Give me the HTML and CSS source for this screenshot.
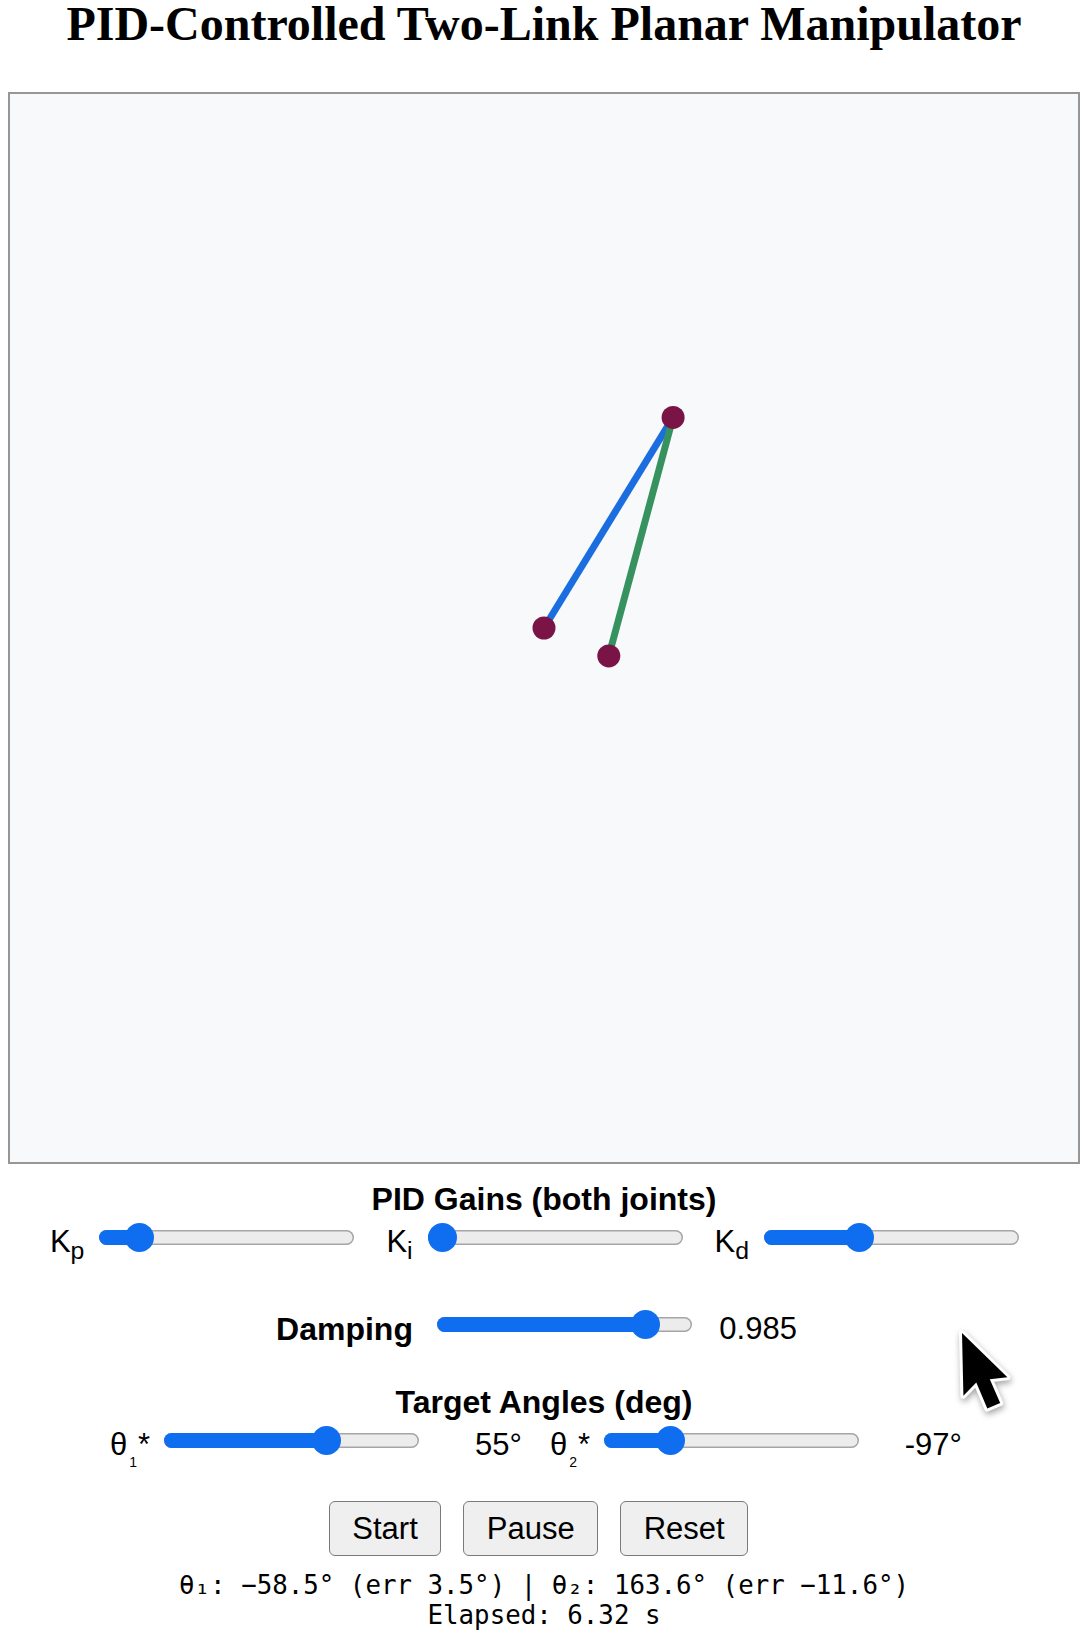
FILE: index.html
```html
<!DOCTYPE html>
<html lang="en">
<head>
<meta charset="utf-8">
<title>PID-Controlled Two-Link Planar Manipulator</title>
<link rel="stylesheet" href="styles.css">
</head>
<body>
<h1 class="title">PID-Controlled Two-Link Planar Manipulator</h1>

<div class="stage">
  <svg class="arm" viewBox="0 0 1068 1068" xmlns="http://www.w3.org/2000/svg">
    <line class="link1" x1="534" y1="534" x2="663.1" y2="323.4"/>
    <line class="link2" x1="663.1" y1="323.4" x2="598.8" y2="561.9"/>
    <circle class="joint" cx="534" cy="534" r="11.5"/>
    <circle class="joint" cx="663.1" cy="323.4" r="11.5"/>
    <circle class="joint" cx="598.8" cy="561.9" r="11.5"/>
  </svg>
</div>

<section class="controls">
  <h2 class="group-title first">PID Gains (both joints)</h2>
  <div class="row row-gains">
    <div class="field">
      <span class="lbl">K<sub>p</sub></span>
      <div class="slider" style="--p:0.113"><div class="fill"></div><div class="thumb"></div></div>
    </div>
    <div class="field">
      <span class="lbl">K<sub>i</sub></span>
      <div class="slider" style="--p:0"><div class="fill"></div><div class="thumb"></div></div>
    </div>
    <div class="field">
      <span class="lbl">K<sub>d</sub></span>
      <div class="slider" style="--p:0.36"><div class="fill"></div><div class="thumb"></div></div>
    </div>
  </div>

  <div class="row row-damp">
    <span class="lbl strong">Damping</span>
    <div class="slider" style="--p:0.858"><div class="fill"></div><div class="thumb"></div></div>
    <span class="val">0.985</span>
  </div>

  <h2 class="group-title second">Target Angles (deg)</h2>
  <div class="row row-target">
    <span class="lbl theta">θ<span class="tsub">1</span>*</span>
    <div class="slider" style="--p:0.655"><div class="fill"></div><div class="thumb"></div></div>
    <span class="val">55°</span>
    <span class="lbl theta">θ<span class="tsub">2</span>*</span>
    <div class="slider" style="--p:0.232"><div class="fill"></div><div class="thumb"></div></div>
    <span class="val">-97°</span>
  </div>

  <div class="buttons">
    <button class="btn" type="button">Start</button>
    <button class="btn" type="button">Pause</button>
    <button class="btn" type="button">Reset</button>
  </div>

  <div class="status">θ₁: −58.5° (err 3.5°) | θ₂: 163.6° (err −11.6°)
Elapsed: 6.32 s</div>
</section>

<svg class="cursor" viewBox="0 0 75 100" width="75" height="100" xmlns="http://www.w3.org/2000/svg">
  <polygon class="cursor-shape" points="12,11 13.4,73.7 26.3,60.5 37.3,86.6 50.2,81.1 39.8,57.2 57.4,55.3"/>
</svg>
</body>
</html>
```

FILE: styles.css
```css
html, body {
  margin: 0;
  padding: 0;
  background: #ffffff;
}

body {
  position: relative;
  margin: 0 8px;
  color: #000;
  font-family: "Liberation Sans", Arial, sans-serif;
  font-size: 31px;
}

.title {
  margin: 0 0 44px;
  font-family: "Liberation Serif", "Times New Roman", serif;
  font-weight: 700;
  font-size: 48px;
  line-height: 48px;
  text-align: center;
}

.stage {
  box-sizing: border-box;
  width: 100%;
  aspect-ratio: 1 / 1;
  border: 2px solid #979797;
  background: #f8f9fa;
}

.arm {
  display: block;
  width: 100%;
  height: 100%;
}

.link1 {
  stroke: #1b6ee0;
  stroke-width: 7;
}

.link2 {
  stroke: #36925f;
  stroke-width: 7;
}

.joint {
  fill: #7b1446;
}

.group-title {
  margin: 0;
  font-size: 32px;
  font-weight: 700;
  line-height: 36px;
  text-align: center;
}

.group-title.first {
  margin-top: 17px;
}

.group-title.second {
  margin-top: 37px;
}

.row {
  display: flex;
  align-items: center;
  justify-content: center;
  line-height: 36px;
}

.row-gains {
  margin-top: 6.5px;
  gap: 32px;
  padding-right: 19px;
}

.field {
  display: flex;
  align-items: center;
  gap: 15px;
}

.lbl {
  white-space: nowrap;
}

.lbl sub {
  font-size: 0.8em;
  line-height: 0;
  vertical-align: -0.28em;
}

.lbl.strong {
  font-weight: 700;
  font-size: 32px;
}

.row-damp {
  margin-top: 51px;
  gap: 24px;
  padding-right: 15px;
}

.row-target {
  margin-top: 7.5px;
  padding-right: 16px;
}

.theta {
  width: 38px;
  flex: none;
}

.tsub {
  font-size: 14px;
  line-height: 0;
  vertical-align: -12px;
  margin: 0 1px 0 2px;
}

.row-target .slider {
  margin-left: 16px;
}

.row-target .val {
  margin-left: 22px;
}

.row-target .val + .lbl {
  margin-left: 28px;
}

.val {
  width: 81px;
  flex: none;
  text-align: right;
}

.slider {
  position: relative;
  flex: none;
  width: 255px;
  height: 15px;
  margin-bottom: 9px;
  border-radius: 8px;
  background: #ececec;
  box-shadow: inset 0 0 0 1.5px #a6a6a6;
}

.fill {
  position: absolute;
  left: 0;
  top: 0;
  height: 15px;
  width: calc(14.5px + var(--p) * 226px);
  border-radius: 8px 0 0 8px;
  background: #0f6ef0;
}

.thumb {
  position: absolute;
  top: -7px;
  left: calc(var(--p) * 226px);
  width: 29px;
  height: 29px;
  border-radius: 50%;
  background: #0f6ef0;
}

.buttons {
  display: flex;
  justify-content: center;
  gap: 22px;
  margin-top: 38px;
  padding-right: 11px;
}

.btn {
  box-sizing: border-box;
  height: 55px;
  margin: 0;
  padding: 0 22.5px;
  font-family: "Liberation Sans", Arial, sans-serif;
  font-size: 31px;
  line-height: 35px;
  color: #000;
  background: #efefef;
  border: 1.5px solid #7a7a7a;
  border-radius: 6px;
}

.status {
  margin-top: 14px;
  font-family: "DejaVu Sans Mono", "Liberation Mono", monospace;
  font-size: 25.8px;
  line-height: 30px;
  text-align: center;
  white-space: pre;
}

.cursor {
  position: absolute;
  left: 942px;
  top: 1322px;
  filter: drop-shadow(1px 3px 3px rgba(0, 0, 0, 0.35));
}

.cursor-shape {
  fill: #000;
  stroke: #fff;
  stroke-width: 6;
  stroke-linejoin: round;
  paint-order: stroke fill;
}
```
